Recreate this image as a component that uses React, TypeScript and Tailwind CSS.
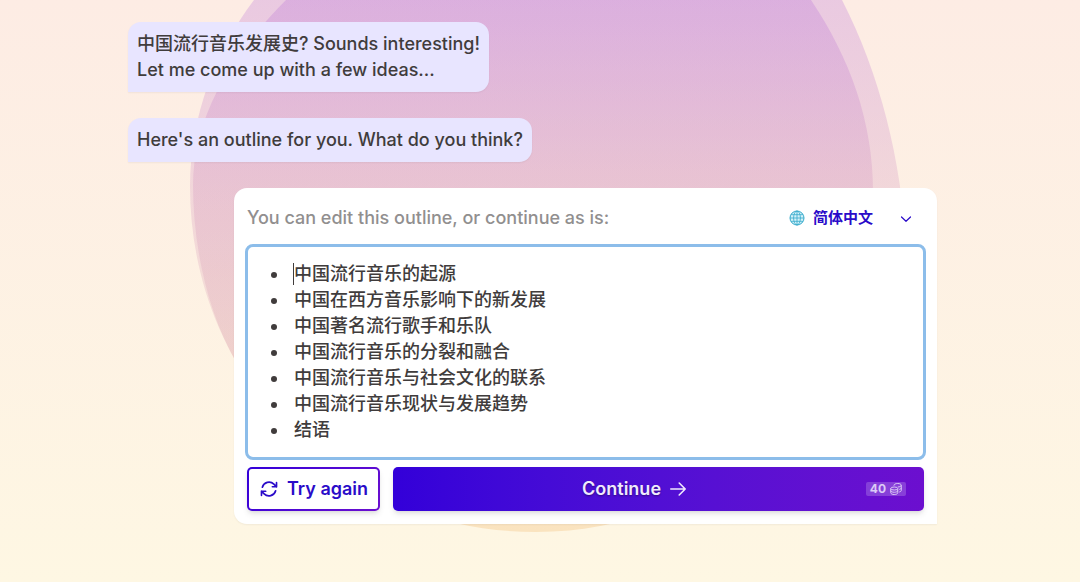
import type { ReactNode } from "react";
import { HiOutlineArrowPath } from "react-icons/hi2";

const outline = [
  "中国流行音乐的起源",
  "中国在西方音乐影响下的新发展",
  "中国著名流行歌手和乐队",
  "中国流行音乐的分裂和融合",
  "中国流行音乐与社会文化的联系",
  "中国流行音乐现状与发展趋势",
  "结语",
];

function Backdrop() {
  return (
    <svg
      aria-hidden="true"
      viewBox="0 0 1080 582"
      preserveAspectRatio="xMidYMin slice"
      className="absolute inset-0 h-full w-full"
    >
      <defs>
        <linearGradient id="blob" gradientUnits="userSpaceOnUse" x1="0" y1="0" x2="0" y2="532">
          <stop offset="0" stopColor="#b266d8" />
          <stop offset="0.35" stopColor="#d08ebd" />
          <stop offset="0.65" stopColor="#dda5b0" />
          <stop offset="1" stopColor="#efad57" />
        </linearGradient>
      </defs>
      <path
        fill="url(#blob)"
        fillOpacity="0.26"
        d="M254 0C216 50 190 116 190 186C190 380 340 532 536 532C728 532 873 378 873 192C873 122 850 58 811 0Z"
      />
      <path
        fill="url(#blob)"
        fillOpacity="0.26"
        d="M286 0C240 46 193 110 193 185C193 250 209 315 236 362C300 460 420 515 560 515C780 515 912 400 906 250C902 160 879 72 842 0Z"
      />
    </svg>
  );
}

function Bubble({ children }: { children: ReactNode }) {
  return (
    <div className="rounded-[13px] rounded-bl-none bg-[#e8e5ff] px-[9px] py-[9px] shadow-xs">
      {children}
    </div>
  );
}

function GlobeIcon() {
  return (
    <svg viewBox="0 0 16 16" className="h-4 w-4" fill="none" stroke="#35a9cb" aria-hidden="true">
      <circle cx="8" cy="8" r="7" fill="#d3f1f8" />
      <ellipse cx="8" cy="8" rx="3.4" ry="7" strokeWidth="0.8" />
      <path d="M8 1v14M1 8h14M2 4.7h12M2 11.3h12" strokeWidth="0.8" />
    </svg>
  );
}

function CoinsIcon() {
  return (
    <svg
      viewBox="0 0 24 24"
      className="h-3 w-3"
      fill="none"
      stroke="currentColor"
      strokeWidth="2"
      aria-hidden="true"
    >
      <ellipse cx="8.5" cy="11" rx="7" ry="3" />
      <path d="M1.5 11v8.5c0 2 3.1 3.5 7 3.5s7-1.5 7-3.5V11M1.5 15.200c0 2 3.100 3.300 7 3.300s7-1.300 7-3.300" />
      <path d="M8 5.500V4.500C8 2.600 11.200 1 15.500 1s7 1.600 7 3.500S19.500 8 15.500 8M22.500 4.500V15c0 1.500-1.500 2.500-4 3M22.500 9.700c0 1.500-1.500 2.600-4 3.100" />
    </svg>
  );
}

export default function App() {
  return (
    <div className="relative min-h-screen bg-linear-to-b from-[#fdece4] to-[#fef7e3] pr-[15px] font-['Inter','Noto_Sans_CJK_SC',sans-serif] text-[18px] leading-[26px] font-medium text-[#403c3c]">
      <Backdrop />
      <main className="relative mx-auto flex max-w-[809px] flex-col items-start gap-[26px] pt-[22px] pb-14">
        <Bubble>
          中国流行音乐发展史? Sounds interesting!
          <br />
          Let me come up with a few ideas...
        </Bubble>
        <Bubble>Here's an outline for you. What do you think?</Bubble>

        <section className="w-full max-w-[703px] self-end rounded-[13px] rounded-br-none bg-white px-[13px] pb-[13px] shadow-xs">
          <header className="flex h-14 items-center justify-between pt-1">
            <p id="outline-label" className="text-[#918f8f]">
              You can edit this outline, or continue as is:
            </p>
            <label className="relative mr-2 flex items-center gap-2 text-[15px] font-bold text-[#2a0bc9]">
              <GlobeIcon />
              <select
                aria-label="Language"
                className="cursor-pointer appearance-none bg-transparent pr-[42px]"
              >
                <option>简体中文</option>
              </select>
              <svg
                viewBox="0 0 12 12"
                className="pointer-events-none absolute right-1 h-3 w-3"
                fill="none"
                stroke="currentColor"
                strokeWidth="1.2"
                strokeLinecap="round"
                strokeLinejoin="round"
                aria-hidden="true"
              >
                <path d="M1.5 5 6 9.3l4.500-4.300" />
              </svg>
            </label>
          </header>

          <div
            role="textbox"
            aria-multiline="true"
            aria-labelledby="outline-label"
            contentEditable
            suppressContentEditableWarning
            className="-mx-0.5 rounded-lg border-[3px] border-[#8cbdea] bg-white py-[14px] pl-[46px] outline-none"
          >
            <ul>
              {outline.map((item, i) => (
                <li
                  key={item}
                  className="relative before:absolute before:top-[11px] before:-left-[23px] before:size-1.5 before:rounded-full before:bg-[#403c3c]"
                >
                  {i === 0 && <span className="absolute top-0.5 -left-px h-[22px] w-px bg-[#403c3c]" />}
                  {item}
                </li>
              ))}
            </ul>
          </div>

          <div className="mt-[7px] flex gap-[13px]">
            <button
              type="button"
              className="flex h-11 items-center gap-2 rounded-[5px] border-2 border-transparent px-[10px] font-semibold text-[#2a0bc9] shadow-md [background:linear-gradient(white,white)_padding-box,linear-gradient(135deg,#3300d9,#6c0fcf)_border-box]"
            >
              <HiOutlineArrowPath className="h-5 w-5 stroke-2" />
              Try again
            </button>
            <button
              type="button"
              className="relative flex h-11 flex-1 items-center justify-center rounded-[5px] bg-linear-to-r from-[#3300d9] to-[#6c0fcf] font-semibold text-[#f0eafd] shadow-md"
            >
              <span className="flex items-center gap-2 pr-12 [text-shadow:0_1px_2px_rgb(0_0_0/0.4)]">
                Continue
                <svg
                  viewBox="0 0 18 18"
                  className="h-[18px] w-[18px]"
                  fill="none"
                  stroke="currentColor"
                  strokeWidth="1.6"
                  strokeLinecap="round"
                  strokeLinejoin="round"
                  aria-hidden="true"
                >
                  <path d="M1.8 9h14.400M10.200 3l6 6-6 6" />
                </svg>
              </span>
              <span className="absolute right-[18px] flex h-[14px] items-center gap-1 rounded-xs bg-white/20 px-1 text-[12px] font-bold text-[#dccbf6]">
                40
                <CoinsIcon />
              </span>
            </button>
          </div>
        </section>
      </main>
    </div>
  );
}
